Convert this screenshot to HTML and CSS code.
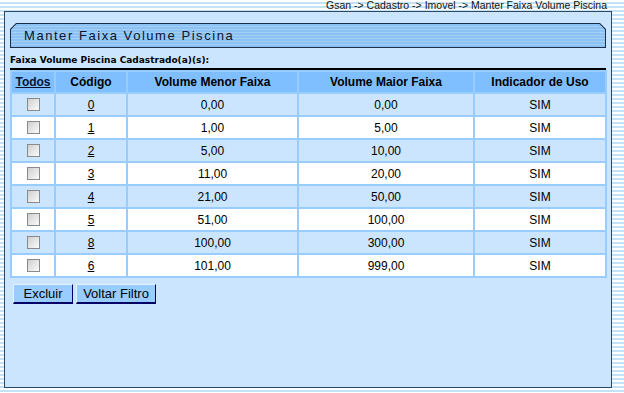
FILE: index.html
```html
<!doctype html>
<html lang="pt">
<head>
	<meta charset="UTF-8" />
	<title>Manter Faixa Volume Piscina</title>
	<link rel="stylesheet" href="styles.css">
</head>
<body>
	<div class="crumb">Gsan -&gt; Cadastro -&gt; Imovel -&gt; Manter Faixa Volume Piscina</div>
	<div class="panel">
		<div class="bar">
			<div class="bar-in">Manter Faixa Volume Piscina</div>
		</div>
		<div class="caption">Faixa Volume Piscina Cadastrado(a)(s):</div>
		<table class="lista">
			<colgroup>
				<col style="width:42px">
				<col style="width:70px">
				<col style="width:169px">
				<col style="width:174px">
				<col style="width:130px">
			</colgroup>
			<tr class="head">
				<th><a href="#">Todos</a></th>
				<th>Código</th>
				<th>Volume Menor Faixa</th>
				<th>Volume Maior Faixa</th>
				<th>Indicador de Uso</th>
			</tr>
			<tr class="r1"><td><input type="checkbox"></td><td><a href="#">0</a></td><td>0,00</td><td>0,00</td><td>SIM</td></tr>
			<tr class="r2"><td><input type="checkbox"></td><td><a href="#">1</a></td><td>1,00</td><td>5,00</td><td>SIM</td></tr>
			<tr class="r1"><td><input type="checkbox"></td><td><a href="#">2</a></td><td>5,00</td><td>10,00</td><td>SIM</td></tr>
			<tr class="r2"><td><input type="checkbox"></td><td><a href="#">3</a></td><td>11,00</td><td>20,00</td><td>SIM</td></tr>
			<tr class="r1"><td><input type="checkbox"></td><td><a href="#">4</a></td><td>21,00</td><td>50,00</td><td>SIM</td></tr>
			<tr class="r2"><td><input type="checkbox"></td><td><a href="#">5</a></td><td>51,00</td><td>100,00</td><td>SIM</td></tr>
			<tr class="r1"><td><input type="checkbox"></td><td><a href="#">8</a></td><td>100,00</td><td>300,00</td><td>SIM</td></tr>
			<tr class="r2"><td><input type="checkbox"></td><td><a href="#">6</a></td><td>101,00</td><td>999,00</td><td>SIM</td></tr>
		</table>
		<div class="botoes">
			<button class="bt bt-excluir">Excluir</button>
			<button class="bt bt-voltar">Voltar Filtro</button>
		</div>
	</div>
</body>
</html>
```

FILE: styles.css
```css
body{
	margin: 0;
	padding: 0;
	font-family: "Liberation Sans", Arial, sans-serif;
	color: #000;
	background: repeating-linear-gradient(180deg, #fff 0, #fff 2px, #c4e2f6 2px, #c4e2f6 4px);
}

.crumb{height: 11px;line-height: 11px;font-size: 10.5px;text-align: right;padding-right: 17px;color: #111;}

.panel{
	box-sizing: border-box;
	height: 377px;
	margin: 0 12px 0 4px;
	padding: 11px 5px 5px 5px;
	border: 1px solid #2d4865;
	background: #cce5fe;
}

.bar{
	height: 25px;
	background: #1c2f48;
	clip-path: polygon(6px 0, calc(100% - 6px) 0, 100% 6px, 100% 100%, 0 100%, 0 6px);
}
.bar-in{
	position: relative;
	top: 1px;
	left: 1px;
	box-sizing: border-box;
	width: calc(100% - 2px);
	height: 23px;
	padding-left: 13px;
	line-height: 23px;
	font-size: 13px;
	letter-spacing: 1.55px;
	color: #0a1230;
	background: repeating-linear-gradient(180deg, #8cc2f3 0, #8cc2f3 2px, #a3cff7 2px, #a3cff7 3px);
	clip-path: polygon(5.5px 0, calc(100% - 5.5px) 0, 100% 5.5px, 100% 100%, 0 100%, 0 5.5px);
}

.caption{
	padding: 6px 0 2px;
	line-height: 12px;
	font-family: "DejaVu Sans", Verdana, sans-serif;
	font-size: 9px;
	font-weight: bold;
	border-bottom: 2px solid #000;
}

.lista{
	table-layout: fixed;
	width: 597px;
	border-spacing: 2px;
	background: #99ccff;
	font-size: 12px;
}
.lista th,.lista td{padding: 0;text-align: center;}
.lista th{height: 20px;background: #80bfff;font-weight: bold;}
.lista td{height: 21px;}
.lista a{color: #000;}
.lista th a{color: #0a1230;}
.r1 td{background: #cce5ff;}
.r2 td{background: #fff;}

.lista input{
	appearance: none;
	-webkit-appearance: none;
	display: block;
	margin: 0 auto;
	width: 13px;
	height: 13px;
	border: 1px solid #8a8a8a;
	background: linear-gradient(135deg, #cfcfcf, #fbfbfb);
	box-sizing: border-box;
}

.botoes{display: flex;gap: 3px;padding: 6px 0 0 3px;}
.bt{
	height: 20px;
	padding: 0;
	font-family: "Liberation Sans", Arial, sans-serif;
	font-size: 13px;
	color: #000;
	background: #99ccff;
	border-style: solid;
	border-width: 1px 1px 2px 1px;
	border-color: #e4f1ff #000066 #000066 #e4f1ff;
}
.bt-excluir{width: 60px;}
.bt-voltar{width: 80px;}
```
